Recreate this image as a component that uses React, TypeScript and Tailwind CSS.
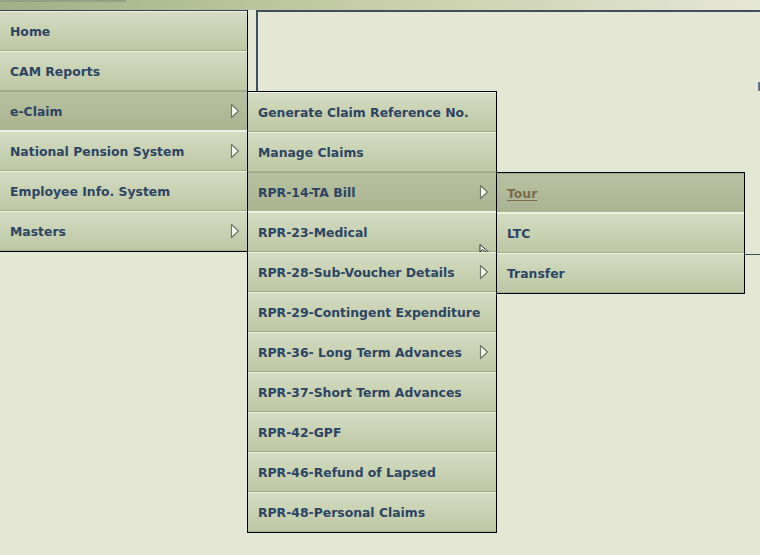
import React from "react";

type Item = { label: string; arrow?: boolean; active?: boolean; link?: boolean };

const mainMenu: Item[] = [
  { label: "Home" },
  { label: "CAM Reports" },
  { label: "e-Claim", arrow: true, active: true },
  { label: "National Pension System", arrow: true },
  { label: "Employee Info. System" },
  { label: "Masters", arrow: true },
];

const claimMenu: Item[] = [
  { label: "Generate Claim Reference No." },
  { label: "Manage Claims" },
  { label: "RPR-14-TA Bill", arrow: true, active: true },
  { label: "RPR-23-Medical" },
  { label: "RPR-28-Sub-Voucher Details", arrow: true },
  { label: "RPR-29-Contingent Expenditure" },
  { label: "RPR-36- Long Term Advances", arrow: true },
  { label: "RPR-37-Short Term Advances" },
  { label: "RPR-42-GPF" },
  { label: "RPR-46-Refund of Lapsed" },
  { label: "RPR-48-Personal Claims" },
];

const taMenu: Item[] = [
  { label: "Tour", active: true, link: true },
  { label: "LTC" },
  { label: "Transfer" },
];

function Arrow() {
  return (
    <svg width="10" height="16" viewBox="0 0 10 16" className="shrink-0">
      <polygon
        points="1.5,1.5 8.5,8 1.5,14.5"
        fill="#fbfcf6"
        stroke="#6f7464"
        strokeWidth="1.2"
        strokeLinejoin="round"
      />
    </svg>
  );
}

function Row({ item }: { item: Item }) {
  return (
    <div
      className={
        item.active
          ? "h-[40px] flex items-center justify-between pl-[10px] pr-[7px] bg-gradient-to-b from-[#b8c1a1] to-[#aab491] border-t border-t-[#9da789] border-b border-b-[#f1f3e6]"
          : "h-[40px] flex items-center justify-between pl-[10px] pr-[7px] bg-gradient-to-b from-[#d4dcc2] to-[#bdc7a4] border-t border-t-[#eef1e2] border-b border-b-[#a3ad89]"
      }
    >
      <span
        className={
          item.link
            ? "pt-[2px] text-[12.4px] font-bold text-[#7d6b4c] underline underline-offset-2"
            : "pt-[2px] text-[12.4px] font-bold text-[#2c4562]"
        }
      >
        {item.label}
      </span>
      {item.arrow && <Arrow />}
    </div>
  );
}

export default function App() {
  return (
    <div className="w-[760px] h-[555px] overflow-hidden bg-[#e5e7d5] font-['DejaVu_Sans',sans-serif]">
      <div className="h-[10px] bg-gradient-to-r from-[#a1b184] via-[#c8cea9] to-[#e5e7d5]">
        <div className="w-[126px] h-[2px] bg-[#959f86]" />
      </div>

      <div className="relative flex items-start">
        <div className="w-[248px] shrink-0 border-t border-t-[#34434f] border-r border-r-black border-b border-b-black">
          {mainMenu.map((item) => (
            <Row key={item.label} item={item} />
          ))}
        </div>

        <div className="ml-[8px] w-[560px] h-[245px] shrink-0 border-t-2 border-l-2 border-b border-[#3e4f5e]">
          <p className="pl-[499px] pt-[66px] text-[12px] font-bold text-[#3f6f9a]">Income</p>
        </div>

        <div className="absolute left-[247px] top-[81px] w-[250px] border border-black">
          {claimMenu.map((item) => (
            <Row key={item.label} item={item} />
          ))}
        </div>

        <div className="absolute left-[496px] top-[162px] w-[249px] border border-black">
          {taMenu.map((item) => (
            <Row key={item.label} item={item} />
          ))}
        </div>

        <svg
          width="10"
          height="8"
          viewBox="0 0 10 8"
          className="absolute left-[479px] top-[234px]"
        >
          <polygon points="1,0.5 1,8 3.5,5.5 7,8 9.5,8" fill="#ffffff" stroke="#2a2a2a" strokeWidth="1" />
        </svg>
      </div>
    </div>
  );
}
